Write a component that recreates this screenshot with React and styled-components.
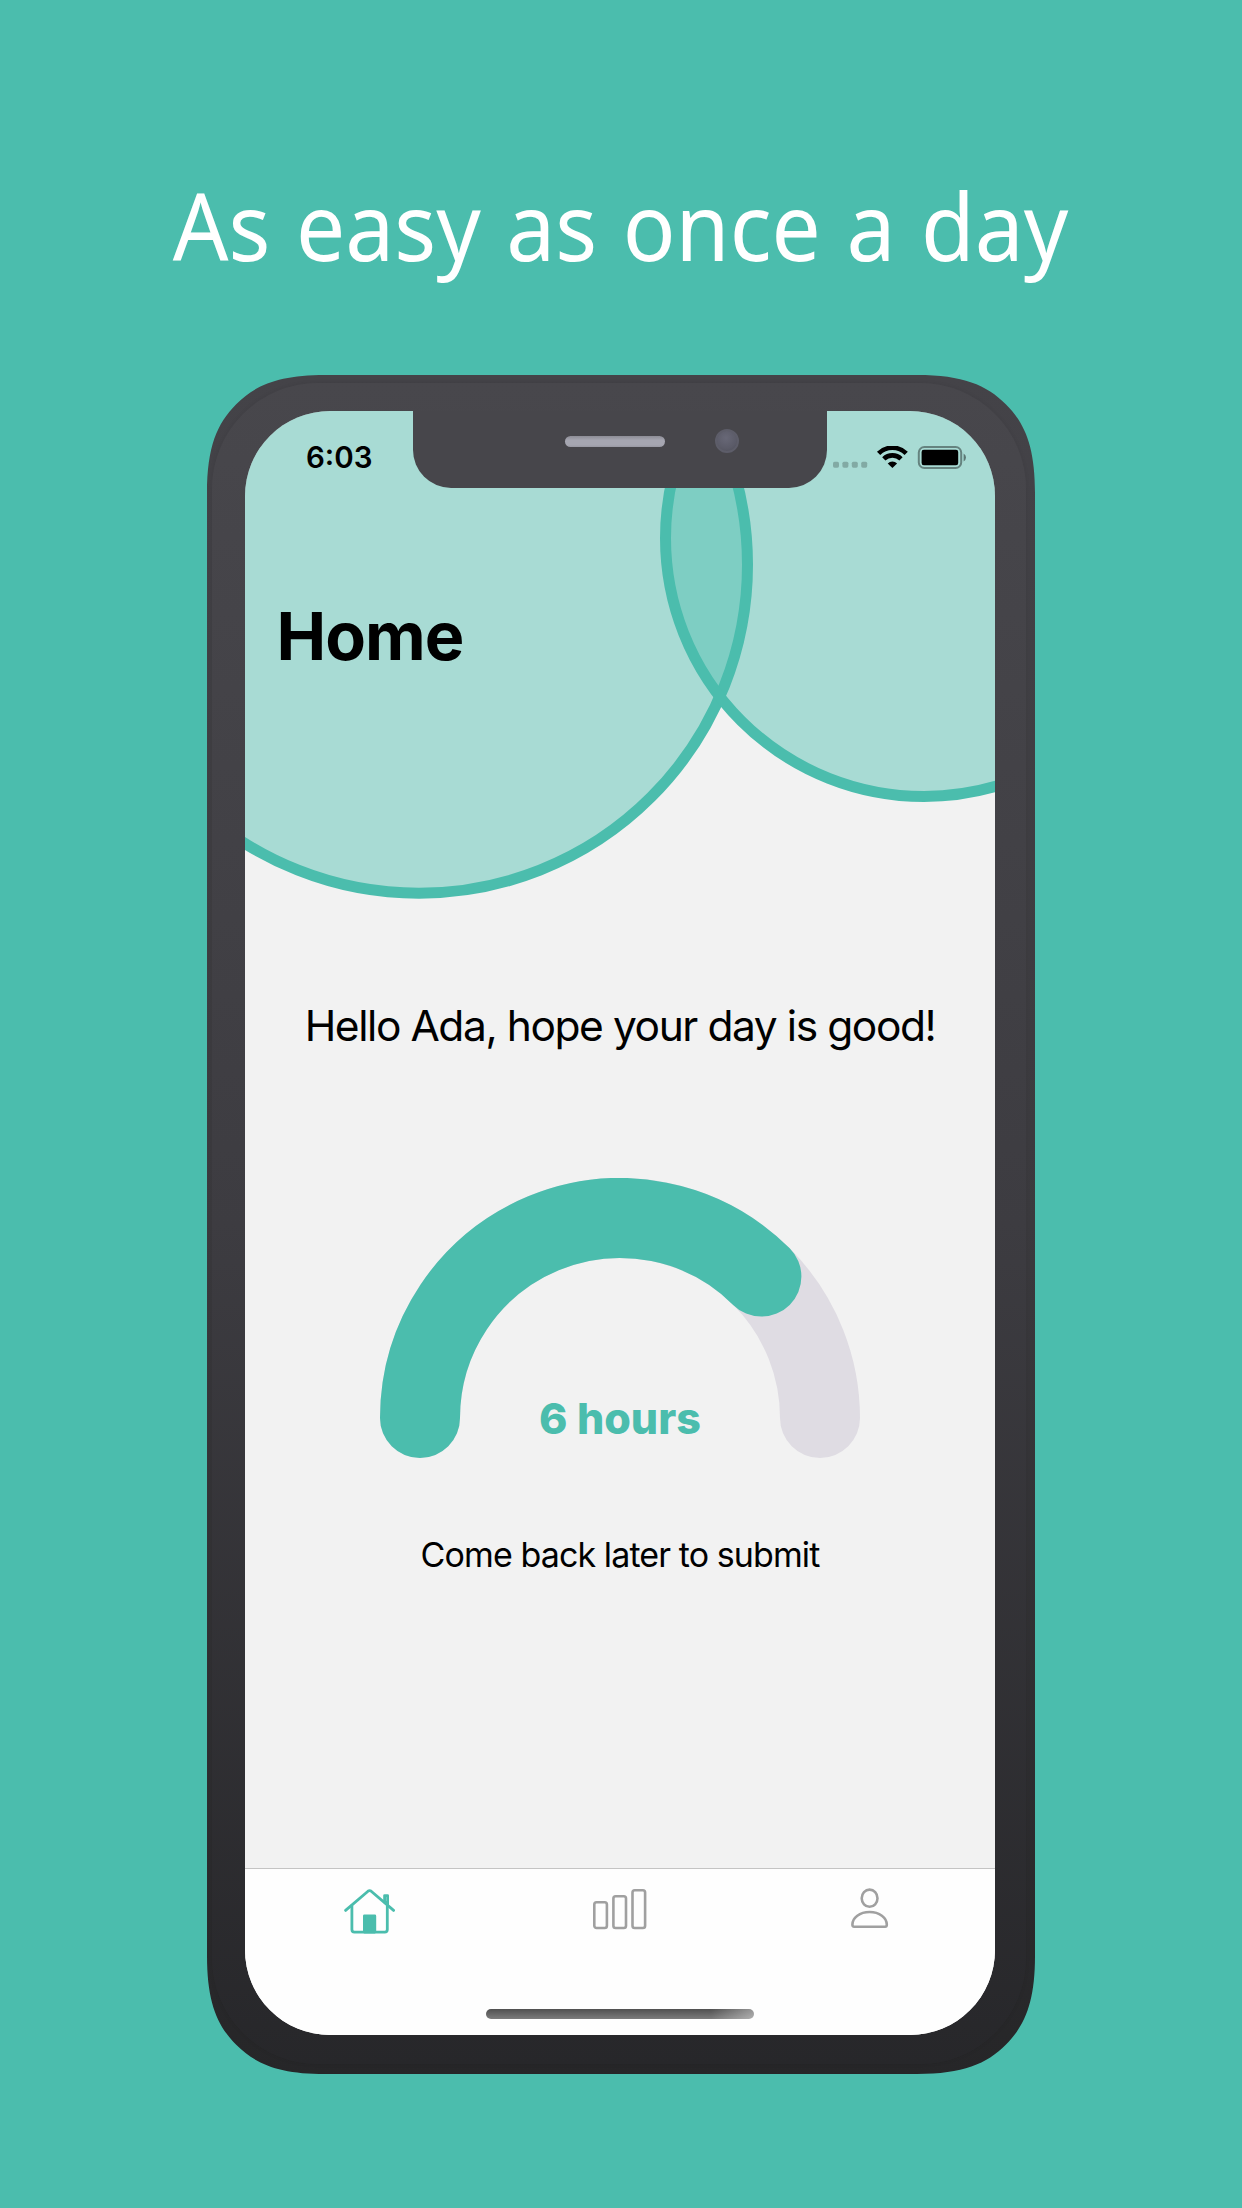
import React from "react";
import styled, { createGlobalStyle } from "styled-components";

const TEAL = "#4bbdad";
const GREY = "#a0a0a0";

const Global = createGlobalStyle`
  body { margin: 0; background: ${TEAL}; }
  * { box-sizing: border-box; }
`;

const Page = styled.main`
  width: 1242px;
  height: 2208px;
  background: ${TEAL};
  display: flex;
  flex-direction: column;
  align-items: center;
  overflow: hidden;
  font-family: Inter, "Liberation Sans", sans-serif;
`;

const Headline = styled.h1`
  margin: 0;
  height: 375px;
  padding-top: 161px;
  font: 400 94px/128px "Noto Sans", "Open Sans", sans-serif;
  color: #fff;
  white-space: nowrap;
  word-spacing: 3px;
  transform: scaleX(0.93);
`;

const Phone = styled.section`
  width: 828px;
  height: 1699px;
  flex: none;
  padding: 8px 9px 10px 5px;
  background: linear-gradient(#444348, #3b3a3e 50%, #262628);
  clip-path: path("M0 118C0 72 10 48.4 29.2 29.2S72 0 118 0H710C756 0 779.6 10 798.8 29.2S828 72 828 118V1581C828 1627 818 1650.6 798.8 1669.8S756 1699 710 1699H118C72 1699 48.4 1689 29.2 1669.8S0 1627 0 1581Z");
`;

const Face = styled.div`
  height: 100%;
  padding: 28px 31px 29px 33px;
  border-radius: 106px;
  background: linear-gradient(#48474c, #3d3c41 50%, #27272a);
  box-shadow: 0 0 4px rgba(0, 0, 0, 0.08);
`;

const Screen = styled.div`
  position: relative;
  height: 1624px;
  display: flex;
  flex-direction: column;
  border-radius: 85px;
  overflow: hidden;
  background: #f2f2f2;
  isolation: isolate;
`;

const Backdrop = styled.svg`
  position: absolute;
  inset: 0;
  z-index: -1;
`;

const Notch = styled.div`
  position: absolute;
  left: 168px;
  top: 0;
  width: 414px;
  height: 77px;
  padding: 25px 0 0 152px;
  display: flex;
  gap: 50px;
  background: #47464b;
  border-radius: 0 0 38px 38px;
`;

const Speaker = styled.div`
  width: 100px;
  height: 11px;
  border-radius: 6px;
  background: linear-gradient(#8d8d96, #a6a6b1 40%, #a6a6b1 80%, #9999a3);
`;

const Camera = styled.div`
  width: 24px;
  height: 24px;
  margin-top: -7px;
  border-radius: 50%;
  border: 2.5px solid #5d5d69;
  background: radial-gradient(circle at 45% 35%, #686877, #5b5b68 60%, #4e4e59);
`;

const StatusBar = styled.div`
  height: 90px;
  padding: 35px 29px 0 61px;
  display: flex;
  justify-content: space-between;
`;

const Time = styled.div`
  margin-top: -7px;
  font-weight: 600;
  font-size: 29.5px;
  line-height: 36px;
`;

const Title = styled.h2`
  margin: 95px 0 0 31.5px;
  font-weight: 700;
  font-size: 66.5px;
  line-height: 80px;
  letter-spacing: -1px;
`;

const Greeting = styled.p`
  margin: 324px 0 0;
  text-align: center;
  font-size: 42.5px;
  line-height: 52px;
  letter-spacing: -1.43px;
  white-space: nowrap;
`;

const GaugeBox = styled.div`
  margin: 125.7px auto 0;
  width: 480px;
  height: 280px;
  display: grid;
  & > * { grid-area: 1 / 1; }
`;

const GaugeValue = styled.strong`
  align-self: end;
  text-align: center;
  margin-bottom: 15px;
  font-weight: 800;
  font-size: 43px;
  line-height: 50px;
  color: ${TEAL};
`;

const Hint = styled.p`
  margin: 76px 0 0;
  text-align: center;
  font-size: 34px;
  line-height: 42px;
  letter-spacing: -0.9px;
  white-space: nowrap;
`;

const TabBar = styled.nav`
  margin-top: auto;
  height: 167px;
  border-top: 1px solid #c4c4c4;
  background: #fefefe;
  display: grid;
  grid-template-columns: repeat(3, 1fr);
  grid-template-rows: 140px 10px;
  justify-items: center;
`;

const Tab = styled.a`
  padding-top: 19px;
  color: ${(p) => (p.$active ? TEAL : GREY)};
  svg { display: block; }
`;

const HomeIndicator = styled.div`
  grid-column: 1 / -1;
  width: 268px;
  height: 10px;
  border-radius: 5px;
  background: linear-gradient(90deg, transparent 84%, rgba(255, 255, 255, 0.4)), linear-gradient(#505050, #7c7c7c);
`;

function Circles() {
  return (
    <Backdrop width="750" height="500" viewBox="0 0 750 500" fill="rgba(75,189,173,0.443)">
      <circle cx="174" cy="153.7" r="328.5" />
      <circle cx="679" cy="127" r="258.5" />
      <g fill="none" stroke={TEAL} strokeWidth="11">
        <circle cx="174" cy="153.7" r="328.5" />
        <circle cx="679" cy="127" r="258.5" />
      </g>
    </Backdrop>
  );
}

function StatusIcons() {
  return (
    <svg width="133" height="23" viewBox="0 0 133 23">
      <g fill="#000" opacity="0.22">
        <rect x="0" y="15.7" width="6" height="6" rx="1.6" />
        <rect x="9.4" y="15.7" width="6" height="6" rx="1.6" />
        <rect x="18.8" y="15.7" width="6" height="6" rx="1.6" />
        <rect x="28.2" y="15.7" width="6" height="6" rx="1.6" />
      </g>
      <g fill="none" stroke="#000" strokeWidth="4.6">
        <path d="M45.6 7.4A19.6 19.6 0 0 1 73.2 7.4" />
        <path d="M50.8 12.9A12.2 12.2 0 0 1 68 12.9" />
      </g>
      <path d="M59.4 22L54.7 17.4A7 7 0 0 1 64.1 17.4Z" />
      <rect x="85.8" y="1" width="42.4" height="21" rx="5.6" fill="none" stroke="#000" strokeOpacity="0.4" strokeWidth="2" />
      <rect x="88.6" y="3.8" width="36.6" height="15.4" rx="2.2" />
      <path d="M130.6 7.6Q133 9 133 11.5T130.6 15.4Z" fillOpacity="0.45" />
    </svg>
  );
}

function Gauge() {
  return (
    <svg width="480" height="280" fill="none" strokeWidth="80" strokeLinecap="round">
      <path d="M40 240A200 200 0 0 1 440 240" stroke="#dfdce3" />
      <path d="M40 240A200 200 0 0 1 381.4 98.6" stroke={TEAL} />
    </svg>
  );
}

function HomeIcon() {
  return (
    <svg width="52" height="48" viewBox="0 0 52 48" fill="none" stroke="currentColor" strokeWidth="2.8" strokeLinecap="round" strokeLinejoin="round">
      <path d="M1.6 22.4L24 3.2Q25.6 2 27.2 3.2L49.6 22.4" />
      <path d="M7.9 18V41.6Q7.9 44.2 10.5 44.2H40.7Q43.3 44.2 43.3 41.6V18" />
      <path d="M40.6 7.6V14L43.6 16.6V7.6Z" />
      <path d="M20.4 28H30.8V44H20.4Z" fill="currentColor" />
    </svg>
  );
}

function BarsIcon() {
  return (
    <svg width="54" height="48" viewBox="0 0 54 48" fill="none" stroke="currentColor" strokeWidth="2.6">
      <rect x="1.3" y="14.2" width="12.6" height="25.8" rx="2.2" />
      <rect x="20.4" y="8.2" width="12.6" height="31.8" rx="2.2" />
      <rect x="39.5" y="2.2" width="12.6" height="37.8" rx="2.2" />
    </svg>
  );
}

function PersonIcon() {
  return (
    <svg width="39" height="48" viewBox="0 0 39 48" fill="none" stroke="currentColor" strokeWidth="2.6">
      <ellipse cx="18.6" cy="10.2" rx="7.9" ry="8.6" />
      <path d="M3.1 38.8Q1.4 38.8 1.4 36.6C1.4 29.6 8.8 24 18.6 24S35.8 29.6 35.8 36.6Q35.8 38.8 34.1 38.8Z" />
    </svg>
  );
}

export default function App() {
  return (
    <Page>
      <Global />
      <Headline>As easy as once a day</Headline>
      <Phone>
        <Face>
          <Screen>
            <Circles />
            <StatusBar>
              <Time>6:03</Time>
              <StatusIcons />
            </StatusBar>
            <Title>Home</Title>
            <Greeting>Hello Ada, hope your day is good!</Greeting>
            <GaugeBox>
              <Gauge />
              <GaugeValue>6 hours</GaugeValue>
            </GaugeBox>
            <Hint>Come back later to submit</Hint>
            <TabBar>
              <Tab $active><HomeIcon /></Tab>
              <Tab><BarsIcon /></Tab>
              <Tab><PersonIcon /></Tab>
              <HomeIndicator />
            </TabBar>
            <Notch>
              <Speaker />
              <Camera />
            </Notch>
          </Screen>
        </Face>
      </Phone>
    </Page>
  );
}
